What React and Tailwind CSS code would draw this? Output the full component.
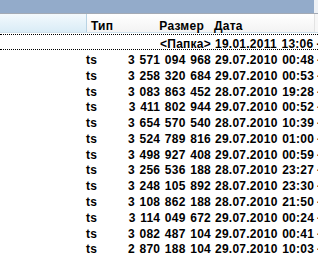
export default function App() {
  const rows = [
    ["3 571 094 968", "29.07.2010 00:48"],
    ["3 258 320 684", "29.07.2010 00:53"],
    ["3 083 863 452", "28.07.2010 19:28"],
    ["3 411 802 944", "29.07.2010 00:52"],
    ["3 654 570 540", "28.07.2010 10:39"],
    ["3 524 789 816", "29.07.2010 01:00"],
    ["3 498 927 408", "29.07.2010 00:59"],
    ["3 256 536 188", "28.07.2010 23:27"],
    ["3 248 105 892", "28.07.2010 23:30"],
    ["3 108 862 188", "28.07.2010 21:50"],
    ["3 114 049 672", "29.07.2010 00:24"],
    ["3 082 487 104", "29.07.2010 00:41"],
    ["2 870 188 104", "29.07.2010 10:03"],
  ];
  const font = { fontFamily: '"Liberation Sans", Arial, sans-serif' };
  return (
    <div
      className="w-[318px] h-[258px] overflow-hidden bg-white text-[12px] leading-none tracking-[0.25px] font-bold text-black"
      style={font}
    >
      <div className="flex h-[14px] border-b border-[#a3aab5]">
        <div className="w-[314px] bg-[#93abca]" />
        <div className="flex-1 bg-[#eef1f5]" />
      </div>
      <div className="flex h-[19px] border-b border-[#cfe1ec]">
        <div className="w-[87px] shrink-0 bg-gradient-to-b from-[#f3f9fd] to-[#d9ecf6] border-r border-[#b8d3e4]" />
        <div className="flex flex-1 items-center pt-[5px] bg-gradient-to-b from-white to-[#f3f3f3] whitespace-nowrap">
          <div className="w-[38px] shrink-0 pl-[4px]">Тип</div>
          <div className="w-[79px] shrink-0 text-right">Размер</div>
          <div className="pl-[10px]">Дата</div>
        </div>
        <div className="w-[4px] shrink-0 border-l border-[#e3e3e3] bg-[#f7f7f7]" />
      </div>
      <div className="flex flex-col pt-[1px] [word-spacing:1px]">
        <div className="flex h-[16px] items-center pt-[4px] border-y border-dotted border-black whitespace-nowrap">
          <div className="w-[85px] shrink-0" />
          <div className="w-[40px] shrink-0" />
          <div className="w-[86px] shrink-0 text-right">&lt;Папка&gt;</div>
          <div className="pl-[4px]">19.01.2011 13:06</div>
          <div className="pl-[3px]">-</div>
        </div>
        {rows.map(([s, d], i) => (
          <div key={i} className="flex h-[15.8px] items-center pt-[4px] whitespace-nowrap">
            <div className="w-[86px] shrink-0" />
            <div className="w-[39px] shrink-0">ts</div>
            <div className="w-[86px] shrink-0 text-right">{s}</div>
            <div className="pl-[4px]">{d}</div>
            <div className="pl-[3px]">-</div>
          </div>
        ))}
      </div>
    </div>
  );
}
